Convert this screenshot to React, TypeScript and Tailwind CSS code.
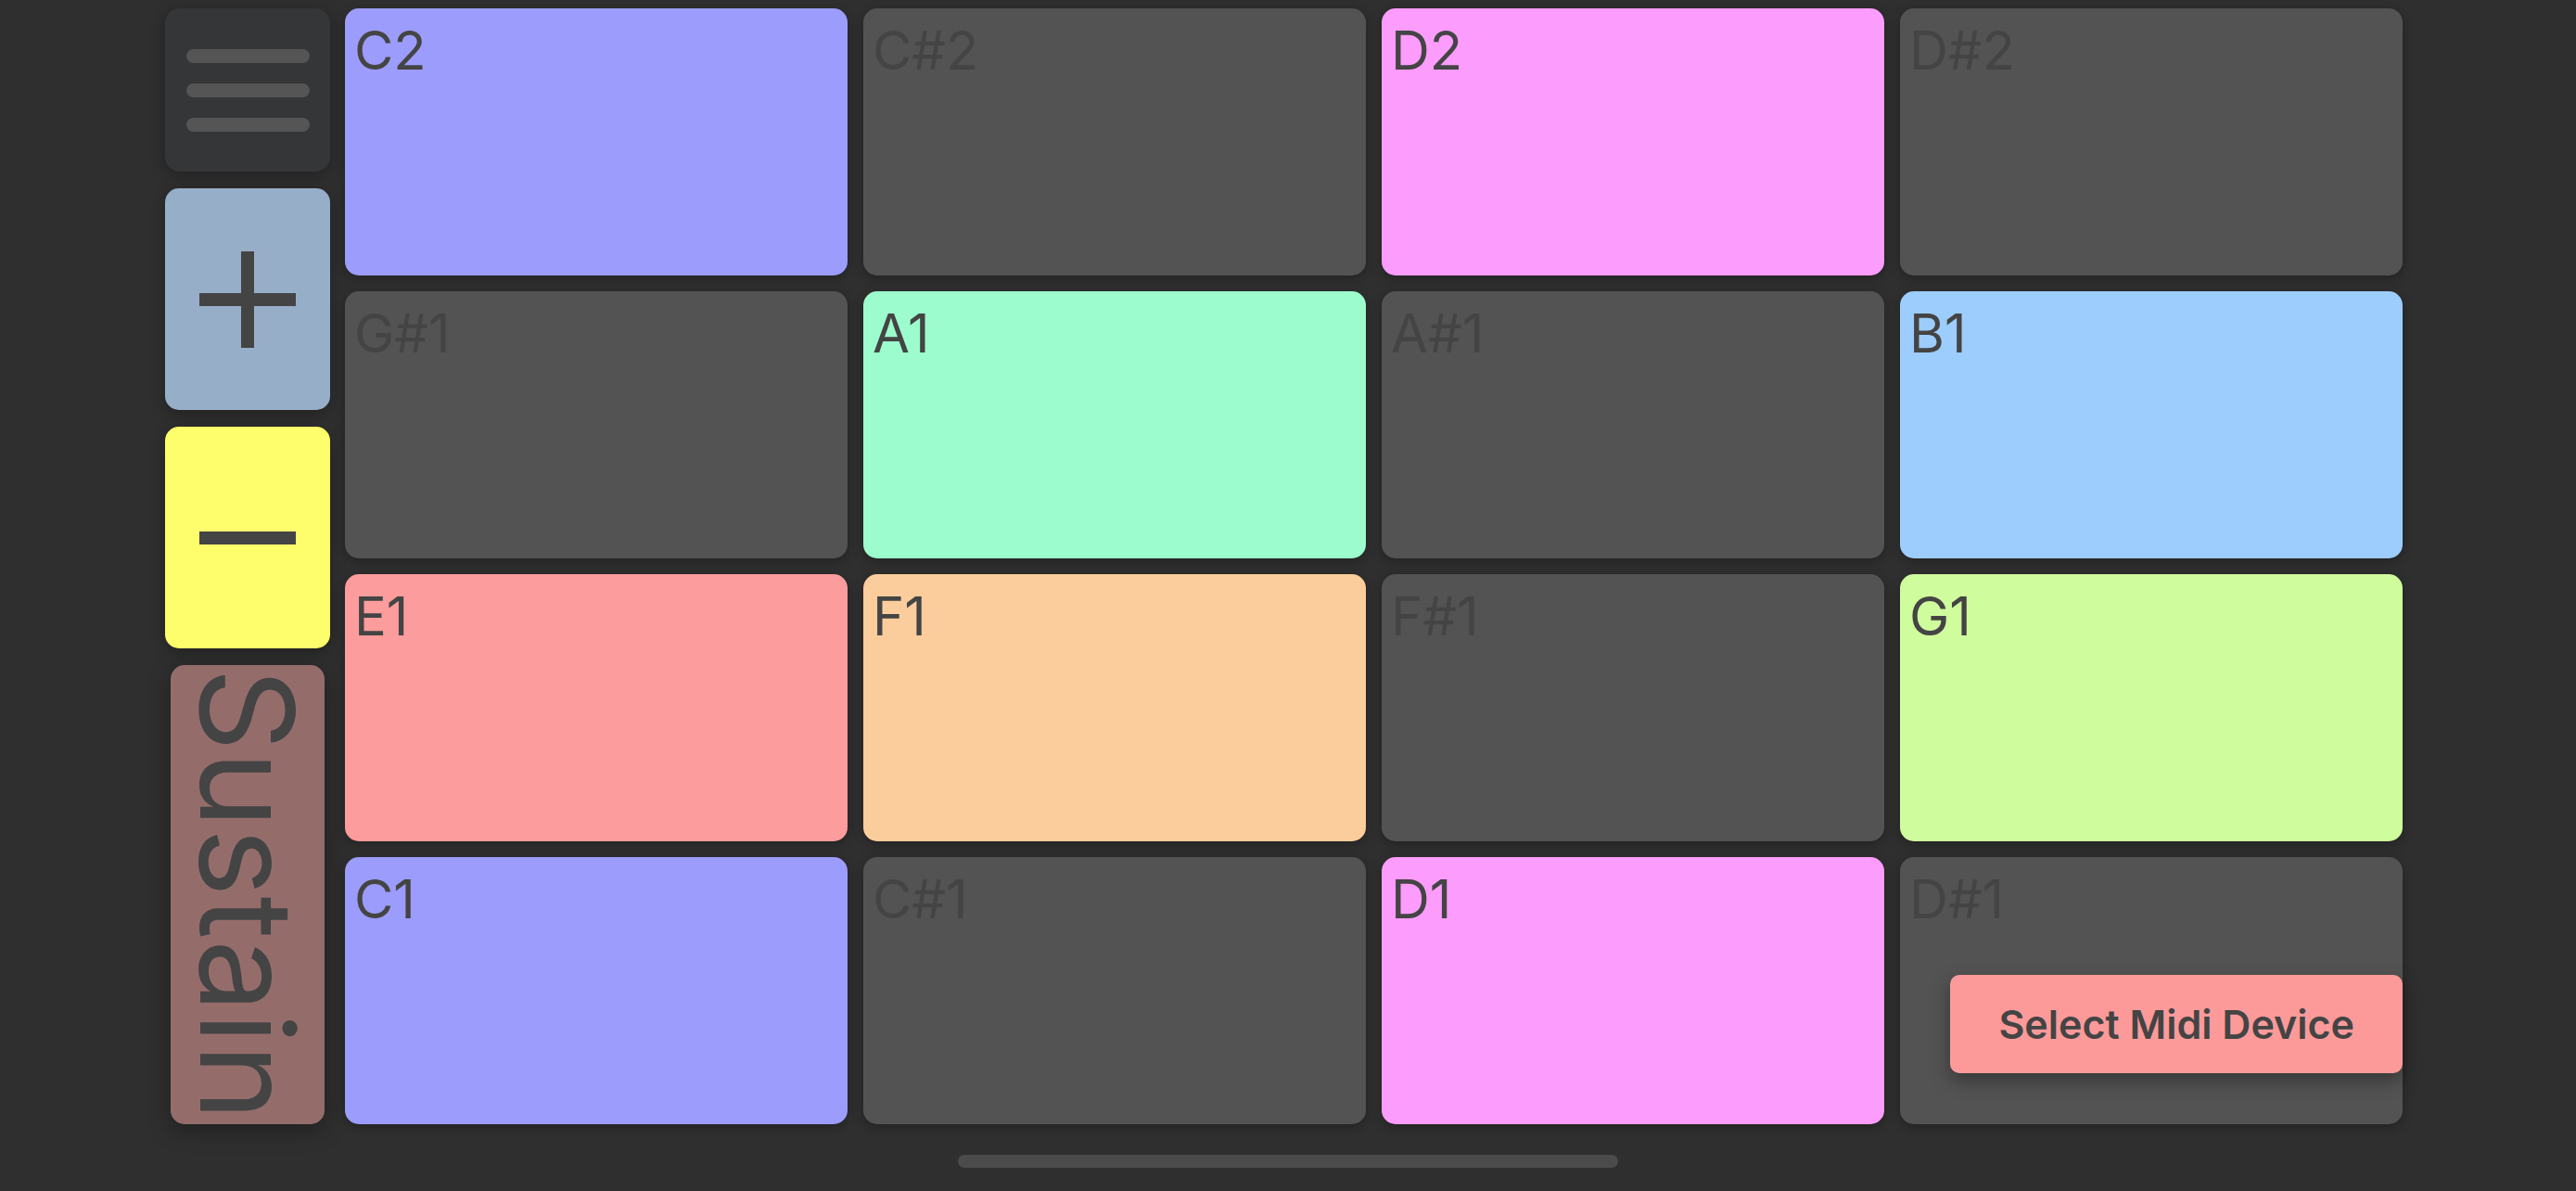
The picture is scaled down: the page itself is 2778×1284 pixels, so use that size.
const pads = [
  { note: 'C2', color: 'bg-[#9c9cfc]' },
  { note: 'C#2', color: 'bg-[#535353]' },
  { note: 'D2', color: 'bg-[#fc9cfc]' },
  { note: 'D#2', color: 'bg-[#535353]' },
  { note: 'G#1', color: 'bg-[#535353]' },
  { note: 'A1', color: 'bg-[#9cfccd]' },
  { note: 'A#1', color: 'bg-[#535353]' },
  { note: 'B1', color: 'bg-[#9ccdfc]' },
  { note: 'E1', color: 'bg-[#fc9c9c]' },
  { note: 'F1', color: 'bg-[#fccd9c]' },
  { note: 'F#1', color: 'bg-[#535353]' },
  { note: 'G1', color: 'bg-[#cffc9c]' },
  { note: 'C1', color: 'bg-[#9c9cfc]' },
  { note: 'C#1', color: 'bg-[#535353]' },
  { note: 'D1', color: 'bg-[#fc9cfc]' },
  { note: 'D#1', color: 'bg-[#535353]' },
]

function Pad({ note, color }: { note: string; color: string }) {
  return (
    <div className={`${color} rounded-[15px] pt-[16px] pl-[10px] shadow-[0_3px_12px_rgba(0,0,0,0.28)]`}>
      <span className="text-[58px] leading-none text-[#444444]">{note}</span>
    </div>
  )
}

export default function App() {
  return (
    <div className="w-[2778px] h-[1284px] bg-[#2f2f2f] flex flex-col overflow-hidden font-['Inter','Noto_Sans',sans-serif]">
      <div className="flex gap-4 pl-[178px] pt-[9px]">
        {/* side controls */}
        <div className="w-[178px] h-[1203px] flex flex-col gap-[18px]">
          <button className="h-[176px] rounded-[16px] bg-[#353638] flex flex-col items-center justify-center gap-[22px] shadow-[0_4px_16px_rgba(0,0,0,0.3)]">
            <span className="w-[133px] h-[15px] rounded-full bg-[#555555]" />
            <span className="w-[133px] h-[15px] rounded-full bg-[#555555]" />
            <span className="w-[133px] h-[15px] rounded-full bg-[#555555]" />
          </button>
          <button className="h-[239px] rounded-[15px] bg-[#97aec8] flex items-center justify-center shadow-[0_4px_16px_rgba(0,0,0,0.3)]">
            <svg width="104" height="104" viewBox="0 0 104 104">
              <rect x="0" y="45" width="104" height="14" fill="#444444" />
              <rect x="45" y="0" width="14" height="104" fill="#444444" />
            </svg>
          </button>
          <button className="h-[239px] rounded-[15px] bg-[#fefe6d] flex items-center justify-center shadow-[0_4px_16px_rgba(0,0,0,0.3)]">
            <svg width="104" height="14" viewBox="0 0 104 14">
              <rect x="0" y="0" width="104" height="14" fill="#444444" />
            </svg>
          </button>
          <div className="flex-1 flex px-[6px]">
            <button className="flex-1 rounded-[15px] bg-[#946d6b] flex items-center justify-center shadow-[0_6px_24px_rgba(0,0,0,0.35)]">
              <span className="[writing-mode:vertical-rl] text-[140px] leading-none text-[#444444]">Sustain</span>
            </button>
          </div>
        </div>

        {/* pad grid */}
        <div className="relative grid grid-cols-[repeat(4,542px)] grid-rows-[repeat(4,288px)] gap-[17px]">
          {pads.map((p) => (
            <Pad key={p.note} note={p.note} color={p.color} />
          ))}
          <button className="absolute right-0 bottom-[55px] h-[106px] px-[52px] rounded-[10px] bg-[#fc9a9a] text-[43px] font-semibold text-[#444444] shadow-[0_8px_20px_rgba(0,0,0,0.35)]">
            Select Midi Device
          </button>
        </div>
      </div>

      {/* home indicator */}
      <div className="flex-1 flex justify-center pt-[33px]">
        <div className="w-[712px] h-[14px] rounded-full bg-[#4b4b4b]" />
      </div>
    </div>
  )
}
